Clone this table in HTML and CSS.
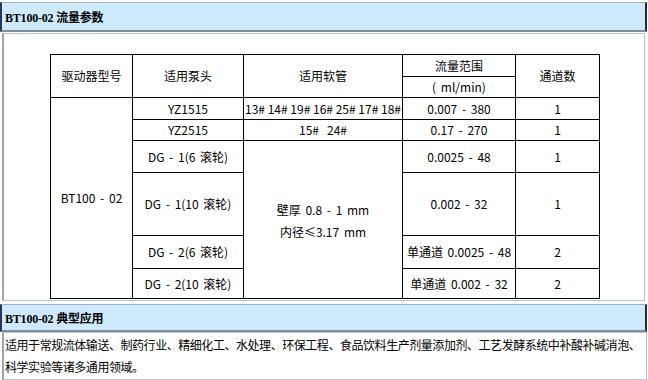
FILE: index.html
```html
<!DOCTYPE html>
<html lang="zh">
<head>
<meta charset="utf-8">
<link rel="stylesheet" href="styles.css">
</head>
<body>
<div class="page">
  <div class="bar"><span class="bar-title">BT100-02 流量参数</span></div>
  <div class="box">
    <table class="spec">
      <colgroup>
        <col class="c1"><col class="c2"><col class="c3"><col class="c4"><col class="c5">
      </colgroup>
      <tr class="h22">
        <td rowspan="2">驱动器型号</td>
        <td rowspan="2">适用泵头</td>
        <td rowspan="2">适用软管</td>
        <td>流量范围</td>
        <td rowspan="2">通道数</td>
      </tr>
      <tr class="h21">
        <td>( ml/min)</td>
      </tr>
      <tr class="h22">
        <td rowspan="6">BT100 - 02</td>
        <td>YZ1515</td>
        <td class="nw">13# 14# 19# 16# 25# 17# 18#</td>
        <td>0.007 - 380</td>
        <td>1</td>
      </tr>
      <tr class="h21">
        <td>YZ2515</td>
        <td class="nw">15#&nbsp;&nbsp; 24#</td>
        <td>0.17 - 270</td>
        <td>1</td>
      </tr>
      <tr class="h32">
        <td>DG - 1(6 滚轮)</td>
        <td rowspan="4"><div class="tube">壁厚 0.8 - 1 mm<br>内径≤3.17 mm</div></td>
        <td>0.0025 - 48</td>
        <td>1</td>
      </tr>
      <tr class="h63">
        <td>DG - 1(10 滚轮)</td>
        <td>0.002 - 32</td>
        <td>1</td>
      </tr>
      <tr class="h33">
        <td>DG - 2(6 滚轮)</td>
        <td>单通道 0.0025 - 48</td>
        <td>2</td>
      </tr>
      <tr class="h30">
        <td>DG - 2(10 滚轮)</td>
        <td>单通道 0.002 - 32</td>
        <td>2</td>
      </tr>
    </table>
  </div>
  <div class="bar bar2"><span class="bar-title">BT100-02 典型应用</span></div>
  <div class="desc">适用于常规流体输送、制药行业、精细化工、水处理、环保工程、食品饮料生产剂量添加剂、工艺发酵系统中补酸补碱消泡、科学实验等诸多通用领域。</div>
</div>
</body>
</html>
```
FILE: styles.css
```css
html, body {
  margin: 0;
  padding: 0;
  background: #ffffff;
}
body {
  font-family: "Noto Sans CJK SC", "Noto Sans", sans-serif;
  font-size: 12px;
  color: #000;
}
.page {
  width: 648px;
  padding-top: 2px;
}
.bar {
  box-sizing: border-box;
  width: 647px;
  height: 30px;
  background: #cde9fb;
  border-top: 1px solid #9fb3c4;
  border-left: 2px solid #2a3752;
  border-right: 2px solid #1e2a40;
  border-bottom: 2px solid #7f8d98;
  display: flex;
  align-items: center;
  padding-left: 3px;
}
.bar-title {
  font-weight: bold;
  font-size: 12px;
  font-family: "Liberation Serif", "Noto Sans CJK SC", serif;
  letter-spacing: -0.2px;
}
.box {
  box-sizing: border-box;
  width: 643px;
  margin-left: 2px;
  margin-top: 1px;
  height: 268px;
  border: 1px solid #b9c5cd;
  border-left: 2px solid #9aa5ad;
  padding: 20px 0 0 46px;
}
.spec {
  border-collapse: collapse;
  table-layout: fixed;
  width: 549px;
}
.spec td {
  border: 1px solid #000;
  text-align: center;
  vertical-align: middle;
  padding: 0;
  line-height: 16px;
  word-spacing: 2px;
}
.c1 { width: 82px; }
.c2 { width: 111px; }
.c3 { width: 159px; }
.c4 { width: 113px; }
.c5 { width: 84px; }
.h21 { height: 21px; }
.h22 { height: 22px; }
.h30 { height: 30px; }
.h32 { height: 32px; }
.h33 { height: 33px; }
.h63 { height: 63px; }
.spec td.nw {
  white-space: nowrap;
  overflow: hidden;
  word-spacing: 0;
}
.tube {
  line-height: 22px;
  padding-top: 2px;
}
.bar2 {
  margin-top: 3px;
  height: 28px;
}
.desc {
  box-sizing: border-box;
  width: 645px;
  margin-left: 2px;
  border: 1px solid #b9c5cd;
  border-left: 2px solid #9aa5ad;
  padding: 1px 0 1px 1px;
  line-height: 22px;
  font-size: 12px;
  letter-spacing: -0.45px;
}
```
